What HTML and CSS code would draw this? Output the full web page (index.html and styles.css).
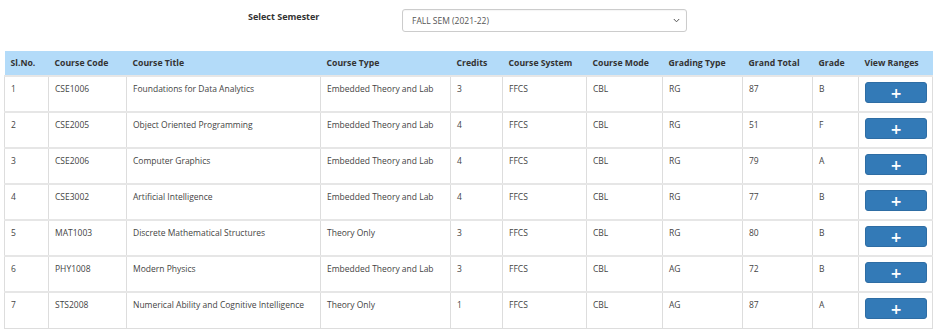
FILE: index.html
```html
<!DOCTYPE html>
<html>
<head>
<meta charset="utf-8">
<link rel="stylesheet" href="styles.css">
</head>
<body>
<div class="page">
  <div class="sem-row">
    <label class="sem-label" for="sem">Select Semester</label>
    <div class="select">
      <span class="select-text">FALL SEM (2021-22)</span>
      <svg class="chev" width="7" height="5" viewBox="0 0 7 5"><path d="M0.8 1 L3.5 3.8 L6.2 1" fill="none" stroke="#555" stroke-width="1"/></svg>
    </div>
  </div>
  <table class="grades">
    <colgroup>
      <col style="width:44px"><col style="width:78px"><col style="width:194px"><col style="width:130px"><col style="width:52px"><col style="width:84px"><col style="width:76px"><col style="width:80px"><col style="width:70px"><col style="width:46px"><col style="width:74px">
    </colgroup>
    <thead>
      <tr>
        <th>Sl.No.</th><th>Course Code</th><th>Course Title</th><th>Course Type</th><th>Credits</th><th>Course System</th><th>Course Mode</th><th>Grading Type</th><th>Grand Total</th><th>Grade</th><th>View Ranges</th>
      </tr>
    </thead>
    <tbody>
      <tr><td>1</td><td>CSE1006</td><td>Foundations for Data Analytics</td><td>Embedded Theory and Lab</td><td>3</td><td>FFCS</td><td>CBL</td><td>RG</td><td>87</td><td>B</td><td class="btn-cell"><button class="btn">+</button></td></tr>
      <tr><td>2</td><td>CSE2005</td><td>Object Oriented Programming</td><td>Embedded Theory and Lab</td><td>4</td><td>FFCS</td><td>CBL</td><td>RG</td><td>51</td><td>F</td><td class="btn-cell"><button class="btn">+</button></td></tr>
      <tr><td>3</td><td>CSE2006</td><td>Computer Graphics</td><td>Embedded Theory and Lab</td><td>4</td><td>FFCS</td><td>CBL</td><td>RG</td><td>79</td><td>A</td><td class="btn-cell"><button class="btn">+</button></td></tr>
      <tr><td>4</td><td>CSE3002</td><td>Artificial Intelligence</td><td>Embedded Theory and Lab</td><td>4</td><td>FFCS</td><td>CBL</td><td>RG</td><td>77</td><td>B</td><td class="btn-cell"><button class="btn">+</button></td></tr>
      <tr><td>5</td><td>MAT1003</td><td>Discrete Mathematical Structures</td><td>Theory Only</td><td>3</td><td>FFCS</td><td>CBL</td><td>RG</td><td>80</td><td>B</td><td class="btn-cell"><button class="btn">+</button></td></tr>
      <tr><td>6</td><td>PHY1008</td><td>Modern Physics</td><td>Embedded Theory and Lab</td><td>3</td><td>FFCS</td><td>CBL</td><td>AG</td><td>72</td><td>B</td><td class="btn-cell"><button class="btn">+</button></td></tr>
      <tr><td>7</td><td>STS2008</td><td>Numerical Ability and Cognitive Intelligence</td><td>Theory Only</td><td>1</td><td>FFCS</td><td>CBL</td><td>AG</td><td>87</td><td>A</td><td class="btn-cell"><button class="btn">+</button></td></tr>
    </tbody>
  </table>
</div>
</body>
</html>
```
FILE: styles.css
```css
html, body {
  margin: 0;
  padding: 0;
  background: #fff;
}
body {
  font-family: "Open Sans", "Liberation Sans", sans-serif;
  font-size: 8.5px;
  color: #444;
}
.page {
  padding: 9px 4px 0 4px;
}
.sem-row {
  display: flex;
  align-items: flex-start;
  padding-left: 244px;
  height: 42px;
}
.sem-label {
  width: 154px;
  font-weight: 700;
  color: #333;
  font-size: 9px;
  line-height: 14px;
  margin-top: 1px;
}
.select {
  box-sizing: border-box;
  width: 285px;
  height: 23px;
  border: 1px solid #ccc;
  border-radius: 3px;
  display: flex;
  align-items: center;
  justify-content: space-between;
  padding: 0 6px 0 9px;
  color: #555;
  box-shadow: inset 0 1px 1px rgba(0,0,0,0.04);
}
.chev {
  display: block;
}
.grades {
  border-collapse: collapse;
  table-layout: fixed;
  width: 928px;
}
.grades th {
  background: #b3dbf9;
  color: #333;
  font-weight: 700;
  font-size: 8.7px;
  text-align: left;
  height: 25px;
  padding: 0 6px;
  box-sizing: border-box;
  vertical-align: middle;
  white-space: nowrap;
}
.grades td {
  height: 36px;
  box-sizing: border-box;
  padding: 5px 6px 0 6px;
  vertical-align: top;
  line-height: 14px;
  border-top: 2px solid #e6e6e6;
  border-left: 1px solid #ddd;
  border-right: 1px solid #ddd;
  white-space: nowrap;
}
.grades tbody tr:last-child td {
  border-bottom: 1px solid #ddd;
}
.grades td.btn-cell {
  padding: 5px 5px 0 5px;
}
.btn {
  display: block;
  width: 62px;
  height: 21px;
  margin: 0 0 0 1px;
  padding: 0;
  border: 1px solid #2e6da4;
  border-radius: 3px;
  background: #337ab7;
  color: #fff;
  font-family: "DejaVu Sans", "Open Sans", sans-serif;
  font-weight: 700;
  font-size: 14px;
  line-height: 18px;
}
```
